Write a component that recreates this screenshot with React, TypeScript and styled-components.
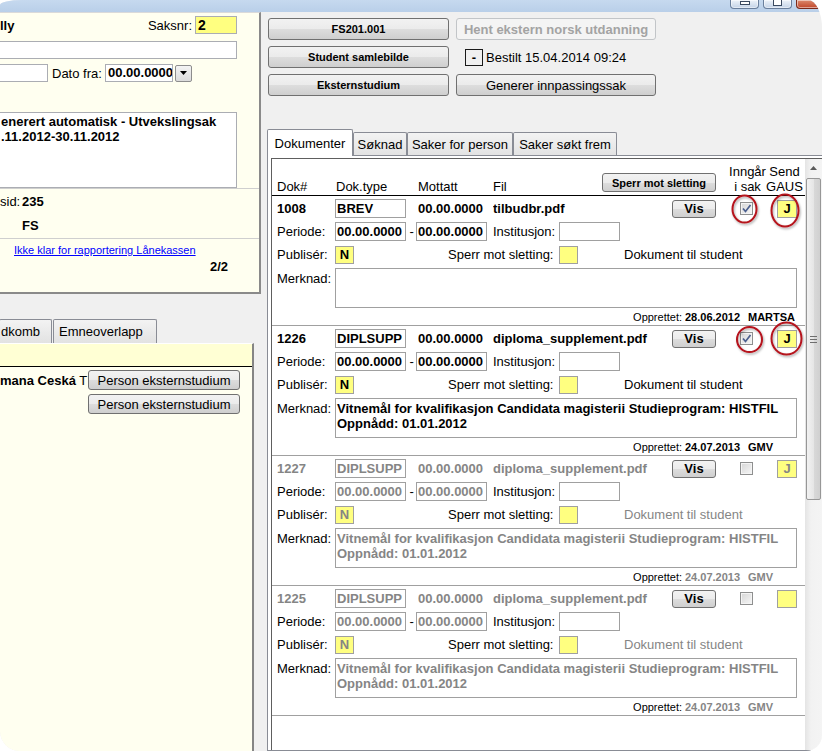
import React from "react";
import styled, { createGlobalStyle } from "styled-components";

const GlobalStyle = createGlobalStyle`
  html, body { margin: 0; padding: 0; background: #ffffff; }
  body { font-family: "Liberation Sans", Arial, sans-serif; font-size: 13px; color: #000; }
  *, *::before, *::after { box-sizing: border-box; }
`;

const GRAY_TEXT = "#858585";
const FIELD_YELLOW = "#ffff80";

/* ---------- window frame ---------- */
const Frame = styled.div`
  position: relative;
  width: 822px;
  height: 751px;
  display: flex;
  flex-direction: column;
  overflow: hidden;
  background: #f0f0f0;
  border-radius: 22px 14px 16px 20px / 5px 28px 16px 20px;
`;

const TitleBar = styled.div`
  flex: none;
  height: 12px;
  background: linear-gradient(#c6d9ef, #b9cfe9);
  display: flex;
  justify-content: flex-end;
  align-items: flex-start;
  gap: 4px;
`;

const WindowButton = styled.div<{ $close?: boolean }>`
  width: ${(p) => (p.$close ? 26 : 29)}px;
  height: 9px;
  border: 1px solid ${(p) => (p.$close ? "#7a2a1a" : "#6a7f9c")};
  border-top: none;
  border-radius: 0 0 4px 4px;
  background: ${(p) =>
    p.$close ? "linear-gradient(#dc8a6e, #c0462a)" : "linear-gradient(#eef3f9, #c4d3e7)"};
  box-shadow: inset 0 0 0 1px rgba(255, 255, 255, 0.5);
  display: flex;
  justify-content: center;
  align-items: flex-start;
`;

const MinGlyph = styled.span`
  margin-top: 1px;
  width: 10px;
  height: 4px;
  background: #fff;
  border: 1px solid #3b4a60;
`;

const MaxGlyph = styled.span`
  width: 9px;
  height: 6px;
  border: 1px solid #3b4a60;
  border-top: none;
  background: #fff;
  box-shadow: inset 0 0 0 1px #fff;
`;

const Body = styled.div`
  flex: 1;
  min-height: 0;
  display: flex;
`;

/* ---------- left column ---------- */
const LeftColumn = styled.div`
  width: 261px;
  flex: none;
  display: flex;
  flex-direction: column;
`;

const CasePanel = styled.div`
  height: 282px;
  flex: none;
  background: #fffff0;
  border-top: 1px solid #dadada;
  border-right: 2px solid #8a8a8a;
  border-bottom: 2px solid #8a8a8a;
  display: flex;
  flex-direction: column;
`;

const CaseRow = styled.div<{ $top: number }>`
  margin-top: ${(p) => p.$top}px;
  height: 18px;
  padding-right: 22px;
  display: flex;
  align-items: center;
  white-space: nowrap;
`;

const Strong = styled.span`
  font-weight: bold;
`;

const Grow = styled.div`
  flex: 1;
`;

const Label = styled.span<{ $w?: number; $ml?: number }>`
  flex: none;
  ${(p) => (p.$w ? `width: ${p.$w}px;` : "")}
  margin-left: ${(p) => p.$ml ?? 0}px;
  white-space: nowrap;
`;

const TextBox = styled.div<{ $w: number; $bg?: string; $bleed?: boolean; $ml?: number; $big?: boolean }>`
  flex: none;
  width: ${(p) => p.$w}px;
  height: 18px;
  margin-left: ${(p) => (p.$bleed ? -2 : p.$ml ?? 0)}px;
  border: 1px solid #abadb3;
  background: ${(p) => p.$bg ?? "#ffffff"};
  font-weight: bold;
  font-size: ${(p) => (p.$big ? 14 : 13)}px;
  line-height: 16px;
  padding: 0 2px;
  overflow: hidden;
  white-space: nowrap;
`;

const DropButton = styled.div`
  flex: none;
  margin-left: 2px;
  width: 17px;
  height: 17px;
  border: 1px solid #8d8d8d;
  border-radius: 2px;
  background: linear-gradient(#f4f4f4, #dcdcdc);
  display: flex;
  align-items: center;
  justify-content: center;
`;

const CaseArea = styled.div`
  margin-top: 30px;
  margin-left: -2px;
  width: 239px;
  height: 76px;
  flex: none;
  border: 1px solid #abadb3;
  background: #ffffff;
  padding: 1px 0 0 2px;
  font-weight: bold;
  line-height: 15px;
  white-space: nowrap;
  overflow: hidden;
`;

const InfoBlock = styled.div`
  height: 50px;
  flex: none;
  border-top: 1px solid #cfcfcf;
  padding-top: 5px;
  display: grid;
  grid-template-columns: 22px auto;
  grid-auto-rows: 15px;
  row-gap: 9px;
  line-height: 15px;
`;

const LinkBlock = styled.div`
  flex: 1;
  border-top: 1px solid #cfcfcf;
  padding: 5px 31px 0 14px;
  display: flex;
  flex-direction: column;
`;

const CaseLink = styled.a`
  font-size: 11px;
  line-height: 13px;
  color: #0000ff;
  text-decoration: underline;
  white-space: nowrap;
`;

const Counter = styled.div`
  margin-top: 2px;
  align-self: flex-end;
  font-weight: bold;
  line-height: 15px;
`;

const LowerLeft = styled.div`
  flex: 1;
  min-height: 0;
  padding-top: 25px;
  display: flex;
  flex-direction: column;
`;

const SmallTabRow = styled.div`
  height: 24px;
  flex: none;
  display: flex;
  align-items: flex-end;
  gap: 1px;
`;

const SmallTab = styled.div<{ $w: number; $pad: number; $ml?: number }>`
  width: ${(p) => p.$w}px;
  height: 24px;
  margin-left: ${(p) => p.$ml ?? 0}px;
  padding-left: ${(p) => p.$pad}px;
  border: 1px solid #898c95;
  border-bottom: none;
  border-radius: 2px 2px 0 0;
  background: linear-gradient(#f3f3f3, #e2e2e2);
  display: flex;
  align-items: center;
  white-space: nowrap;
  overflow: hidden;
`;

const PersonPanel = styled.div`
  flex: 1;
  width: 254px;
  background: #fffff0;
  border-top: 1px solid #ffffff;
  border-right: 2px solid #858585;
  display: flex;
  flex-direction: column;
`;

const PersonHeader = styled.div`
  height: 23px;
  flex: none;
  background: #ffffd4;
  border-bottom: 1px solid #000000;
`;

const PersonRow = styled.div<{ $top: number }>`
  margin-top: ${(p) => p.$top}px;
  height: 20px;
  display: flex;
  align-items: center;
`;

const NameCell = styled.div`
  width: 88px;
  flex: none;
  white-space: nowrap;
  overflow: hidden;
`;

const PersonButton = styled.button`
  width: 152px;
  height: 20px;
  flex: none;
  padding: 0;
  font-family: inherit;
  font-size: 13px;
  color: #000;
  border: 1px solid #707070;
  border-radius: 3px;
  background: linear-gradient(#f2f2f2 0%, #ebebeb 50%, #dddddd 51%, #cfcfcf 100%);
`;

/* ---------- right column ---------- */
const RightColumn = styled.div`
  flex: 1;
  min-width: 0;
  padding-left: 7px;
  display: flex;
  flex-direction: column;
`;

const ActionGrid = styled.div`
  margin-top: 6px;
  display: grid;
  grid-template-columns: 181px 200px;
  grid-auto-rows: 22px;
  column-gap: 7px;
  row-gap: 6px;
`;

const ActionButton = styled.button<{ $bold?: boolean; $off?: boolean }>`
  padding: 0;
  font-family: inherit;
  font-size: ${(p) => (p.$bold ? 11 : 13)}px;
  font-weight: ${(p) => (p.$bold || p.$off ? "bold" : "normal")};
  color: ${(p) => (p.$off ? "#a3a3a3" : "#000")};
  border: 1px solid ${(p) => (p.$off ? "#c2c5c8" : "#707070")};
  border-radius: 3px;
  background: ${(p) =>
    p.$off ? "#f4f4f4" : "linear-gradient(#f2f2f2 0%, #ebebeb 50%, #dddddd 51%, #cfcfcf 100%)"};
`;

const OrderLine = styled.div`
  display: flex;
  align-items: center;
  padding-left: 9px;
  white-space: nowrap;
`;

const MinusBox = styled.div`
  width: 18px;
  height: 17px;
  border: 1px solid #1a1a1a;
  display: flex;
  align-items: center;
  justify-content: center;
  font-weight: bold;
  margin-right: 3px;
`;

const TabRow = styled.div`
  margin-top: 33px;
  margin-left: -1px;
  height: 26px;
  flex: none;
  display: flex;
  align-items: flex-end;
`;

const MainTab = styled.div<{ $w: number; $active?: boolean }>`
  width: ${(p) => p.$w}px;
  height: ${(p) => (p.$active ? 27 : 23)}px;
  margin-bottom: ${(p) => (p.$active ? -1 : 0)}px;
  position: relative;
  z-index: ${(p) => (p.$active ? 1 : 0)};
  border: 1px solid #898c95;
  border-bottom: none;
  border-radius: 2px 2px 0 0;
  background: ${(p) => (p.$active ? "#ffffff" : "linear-gradient(#f3f3f3, #e3e3e3)")};
  display: flex;
  align-items: center;
  justify-content: center;
  white-space: nowrap;
`;

const TabPanel = styled.div`
  flex: 1;
  min-height: 0;
  margin: 0 -5px 0 -1px;
  border: 1px solid #898c95;
  background: #ffffff;
  padding: 2px 3px 0 3px;
  display: flex;
`;

const ListBox = styled.div`
  flex: 1;
  min-width: 0;
  border: 1px solid #5e5e5e;
  border-bottom: none;
  display: flex;
`;

const List = styled.div`
  flex: 1;
  min-width: 0;
  background: #ffffff;
  display: flex;
  flex-direction: column;
`;

const HeaderRow = styled.div`
  height: 37px;
  flex: none;
  border-bottom: 1px solid #000;
  padding: 0 2px 1px 5px;
  display: flex;
  align-items: flex-end;
  line-height: 15px;
  white-space: nowrap;
`;

const HeadCell = styled.div<{ $w?: number; $grow?: boolean; $center?: boolean }>`
  ${(p) => (p.$w ? `width: ${p.$w}px; flex: none;` : "")}
  ${(p) => (p.$grow ? "flex: 1;" : "")}
  ${(p) => (p.$center ? "text-align: center;" : "")}
`;

const SperrButton = styled.button`
  width: 114px;
  height: 19px;
  flex: none;
  margin: 0 13px 2px 0;
  padding: 0;
  font-family: inherit;
  font-size: 11px;
  font-weight: bold;
  color: #000;
  border: 1px solid #707070;
  border-radius: 3px;
  background: linear-gradient(#f2f2f2 0%, #ebebeb 50%, #dddddd 51%, #cfcfcf 100%);
`;

const Record = styled.div`
  height: 130px;
  flex: none;
  border-bottom: 1px solid #a0a0a0;
  padding: 3px 8px 0 5px;
  display: flex;
  flex-direction: column;
`;

const FieldStack = styled.div`
  display: flex;
  flex-direction: column;
  gap: 4px;
`;

const FieldRow = styled.div<{ $tall?: boolean }>`
  height: ${(p) => (p.$tall ? 40 : 19)}px;
  display: flex;
  align-items: ${(p) => (p.$tall ? "flex-start" : "center")};
  white-space: nowrap;
`;

const Cell = styled.div<{ $w?: number; $ml?: number; $dim?: boolean; $bold?: boolean; $grow?: boolean }>`
  ${(p) => (p.$w !== undefined ? `width: ${p.$w}px; flex: none;` : "")}
  ${(p) => (p.$grow ? "flex: 1; min-width: 0;" : "")}
  margin-left: ${(p) => p.$ml ?? 0}px;
  color: ${(p) => (p.$dim ? GRAY_TEXT : "#000")};
  font-weight: ${(p) => (p.$bold ? "bold" : "normal")};
  overflow: hidden;
`;

const RemarkLabel = styled.div`
  width: 58px;
  flex: none;
  padding-top: 3px;
  line-height: 15px;
`;

const Input = styled.div<{ $w: number; $ml?: number; $dim?: boolean }>`
  width: ${(p) => p.$w}px;
  height: 19px;
  flex: none;
  margin-left: ${(p) => p.$ml ?? 0}px;
  border: 1px solid #a0a0a0;
  background: #ffffff;
  padding: 0 1px;
  line-height: 17px;
  font-weight: bold;
  color: ${(p) => (p.$dim ? GRAY_TEXT : "#000")};
  overflow: hidden;
`;

const FlagBox = styled.div<{ $w?: number; $ml?: number; $dim?: boolean }>`
  width: ${(p) => p.$w ?? 19}px;
  height: 18px;
  flex: none;
  margin-left: ${(p) => p.$ml ?? 0}px;
  border: 1px solid #a0a0a0;
  background: ${FIELD_YELLOW};
  display: flex;
  align-items: center;
  justify-content: center;
  font-weight: bold;
  color: ${(p) => (p.$dim ? GRAY_TEXT : "#000")};
`;

const VisButton = styled.button`
  width: 44px;
  height: 18px;
  flex: none;
  padding: 0;
  font-family: inherit;
  font-size: 13px;
  font-weight: bold;
  color: #000;
  border: 1px solid #707070;
  border-radius: 3px;
  background: linear-gradient(#f2f2f2 0%, #ebebeb 50%, #dddddd 51%, #cfcfcf 100%);
`;

const CheckBox = styled.div`
  width: 13px;
  height: 13px;
  flex: none;
  margin-left: 24px;
  border: 1px solid #8e8f8f;
  background: linear-gradient(135deg, #d6d6d6, #f7f7f7);
  box-shadow: inset 0 0 0 1px #f4f4f4;
  display: flex;
  align-items: center;
  justify-content: center;
`;

const Remark = styled.div<{ $dim?: boolean }>`
  flex: 1;
  height: 40px;
  border: 1px solid #a0a0a0;
  padding: 2px 1px 0 1px;
  font-weight: bold;
  line-height: 15px;
  color: ${(p) => (p.$dim ? GRAY_TEXT : "#000")};
  overflow: hidden;
  white-space: nowrap;
`;

const Footer = styled.div`
  height: 17px;
  display: flex;
  justify-content: flex-end;
  align-items: center;
  font-size: 11px;
  white-space: nowrap;
`;

const Scrollbar = styled.div`
  width: 17px;
  flex: none;
  background: linear-gradient(90deg, #e4e4e4, #f2f2f2 35%, #f4f4f4);
  display: flex;
  flex-direction: column;
  align-items: center;
`;

const ScrollArrow = styled.div`
  height: 17px;
  width: 100%;
  display: flex;
  align-items: center;
  justify-content: center;
`;

const Thumb = styled.div`
  margin-top: 2px;
  width: 15px;
  height: 322px;
  border: 1px solid #979797;
  border-radius: 2px;
  background: linear-gradient(90deg, #f2f2f2, #e6e6e6 50%, #d9d9d9 51%, #d0d0d0);
  display: flex;
  align-items: center;
  justify-content: center;
`;

const Annotations = styled.svg`
  position: absolute;
  left: 0;
  top: 0;
  pointer-events: none;
`;

/* ---------- data ---------- */
type Doc = {
  nr: string;
  type: string;
  file: string;
  remark: string[];
  inSak: boolean;
  gaus: string;
  created: string;
  user: string;
  dim: boolean;
};

const REMARK = [
  "Vitnemål for kvalifikasjon Candidata magisterii Studieprogram: HISTFIL",
  "Oppnådd: 01.01.2012",
];

const docs: Doc[] = [
  { nr: "1008", type: "BREV", file: "tilbudbr.pdf", remark: [], inSak: true, gaus: "J", created: "28.06.2012", user: "MARTSA", dim: false },
  { nr: "1226", type: "DIPLSUPP", file: "diploma_supplement.pdf", remark: REMARK, inSak: true, gaus: "J", created: "24.07.2013", user: "GMV", dim: false },
  { nr: "1227", type: "DIPLSUPP", file: "diploma_supplement.pdf", remark: REMARK, inSak: false, gaus: "J", created: "24.07.2013", user: "GMV", dim: true },
  { nr: "1225", type: "DIPLSUPP", file: "diploma_supplement.pdf", remark: REMARK, inSak: false, gaus: "", created: "24.07.2013", user: "GMV", dim: true },
];

const circles = [
  { cx: 744.5, cy: 209, rx: 12, ry: 13.5 },
  { cx: 785, cy: 210.5, rx: 13.5, ry: 16 },
  { cx: 749.5, cy: 339.5, rx: 12.5, ry: 12.5 },
  { cx: 786.5, cy: 338.5, rx: 15, ry: 16 },
];

function DocRecord({ d }: { d: Doc }) {
  return (
    <Record>
      <FieldStack>
        <FieldRow>
          <Cell $w={58} $bold $dim={d.dim}>{d.nr}</Cell>
          <Input $w={71} $dim={d.dim}>{d.type}</Input>
          <Cell $w={75} $ml={12} $bold $dim={d.dim}>00.00.0000</Cell>
          <Cell $grow $bold $dim={d.dim}>{d.file}</Cell>
          <VisButton>Vis</VisButton>
          <CheckBox>
            {d.inSak && (
              <svg width="11" height="11" viewBox="0 0 11 11">
                <path d="M2 5.5 L4.5 8.5 L9.5 2" fill="none" stroke="#4b5f8e" strokeWidth="1.7" />
              </svg>
            )}
          </CheckBox>
          <FlagBox $w={20} $ml={24} $dim={d.dim}>{d.gaus}</FlagBox>
        </FieldRow>
        <FieldRow>
          <Cell $w={58}>Periode:</Cell>
          <Input $w={71} $dim={d.dim}>00.00.0000</Input>
          <Cell $w={10}>&nbsp;-</Cell>
          <Input $w={71} $dim={d.dim}>00.00.0000</Input>
          <Cell $w={66} $ml={6}>Institusjon:</Cell>
          <Input $w={61} />
        </FieldRow>
        <FieldRow>
          <Cell $w={58}>Publisér:</Cell>
          <FlagBox $dim={d.dim}>N</FlagBox>
          <Cell $w={111} $ml={94}>Sperr mot sletting:</Cell>
          <FlagBox />
          <Cell $ml={46} $dim={d.dim}>Dokument til student</Cell>
        </FieldRow>
        <FieldRow $tall>
          <RemarkLabel>Merknad:</RemarkLabel>
          <Remark $dim={d.dim}>
            {d.remark.map((line) => (
              <div key={line}>{line}</div>
            ))}
          </Remark>
        </FieldRow>
      </FieldStack>
      <Footer>
        <Cell>Opprettet:</Cell>
        <Cell $w={63} $ml={3} $bold $dim={d.dim}>{d.created}</Cell>
        <Cell $w={49} $bold $dim={d.dim}>{d.user}</Cell>
      </Footer>
    </Record>
  );
}

export default function App() {
  return (
    <>
      <GlobalStyle />
      <Frame>
        <TitleBar>
          <WindowButton>
            <MinGlyph />
          </WindowButton>
          <WindowButton>
            <MaxGlyph />
          </WindowButton>
          <WindowButton $close />
        </TitleBar>
        <Body>
          <LeftColumn>
            <CasePanel>
              <CaseRow $top={3}>
                <Strong>lly</Strong>
                <Grow />
                <Label>Saksnr:</Label>
                <TextBox $w={42} $bg={FIELD_YELLOW} $ml={3} $big>2</TextBox>
              </CaseRow>
              <CaseRow $top={7}>
                <TextBox $w={239} $bleed />
              </CaseRow>
              <CaseRow $top={5}>
                <TextBox $w={50} $bleed />
                <Label $w={53} $ml={4}>Dato fra:</Label>
                <TextBox $w={68}>00.00.0000</TextBox>
                <DropButton>
                  <svg width="7" height="4" viewBox="0 0 7 4">
                    <path d="M0 0 H7 L3.5 4 Z" fill="#000" />
                  </svg>
                </DropButton>
              </CaseRow>
              <CaseArea>
                <div>enerert automatisk - Utvekslingsak</div>
                <div>.11.2012-30.11.2012</div>
              </CaseArea>
              <InfoBlock>
                <span>sid:</span>
                <Strong>235</Strong>
                <span />
                <Strong>FS</Strong>
              </InfoBlock>
              <LinkBlock>
                <CaseLink href="#">Ikke klar for rapportering Lånekassen</CaseLink>
                <Counter>2/2</Counter>
              </LinkBlock>
            </CasePanel>
            <LowerLeft>
              <SmallTabRow>
                <SmallTab $w={53} $pad={1} $ml={-1}>dkomb</SmallTab>
                <SmallTab $w={104} $pad={5}>Emneoverlapp</SmallTab>
              </SmallTabRow>
              <PersonPanel>
                <PersonHeader />
                <PersonRow $top={3}>
                  <NameCell>
                    <Strong>mana Ceská</Strong> T
                  </NameCell>
                  <PersonButton>Person eksternstudium</PersonButton>
                </PersonRow>
                <PersonRow $top={4}>
                  <NameCell />
                  <PersonButton>Person eksternstudium</PersonButton>
                </PersonRow>
              </PersonPanel>
            </LowerLeft>
          </LeftColumn>

          <RightColumn>
            <ActionGrid>
              <ActionButton $bold>FS201.001</ActionButton>
              <ActionButton $off>Hent ekstern norsk utdanning</ActionButton>
              <ActionButton $bold>Student samlebilde</ActionButton>
              <OrderLine>
                <MinusBox>-</MinusBox>
                <span>Bestilt 15.04.2014 09:24</span>
              </OrderLine>
              <ActionButton $bold>Eksternstudium</ActionButton>
              <ActionButton>Generer innpassingssak</ActionButton>
            </ActionGrid>

            <TabRow>
              <MainTab $w={86} $active>Dokumenter</MainTab>
              <MainTab $w={54}>Søknad</MainTab>
              <MainTab $w={106}>Saker for person</MainTab>
              <MainTab $w={104}>Saker søkt frem</MainTab>
            </TabRow>

            <TabPanel>
              <ListBox>
                <List>
                  <HeaderRow>
                    <HeadCell $w={59}>Dok#</HeadCell>
                    <HeadCell $w={82}>Dok.type</HeadCell>
                    <HeadCell $w={75}>Mottatt</HeadCell>
                    <HeadCell $grow>Fil</HeadCell>
                    <SperrButton>Sperr mot sletting</SperrButton>
                    <HeadCell $w={37} $center>
                      Inngår
                      <br />i sak
                    </HeadCell>
                    <HeadCell $w={37} $center>
                      Send
                      <br />
                      GAUS
                    </HeadCell>
                  </HeaderRow>
                  {docs.map((d) => (
                    <DocRecord key={d.nr} d={d} />
                  ))}
                </List>
                <Scrollbar>
                  <ScrollArrow>
                    <svg width="7" height="4" viewBox="0 0 7 4">
                      <path d="M0 4 H7 L3.5 0 Z" fill="#5a5a5a" />
                    </svg>
                  </ScrollArrow>
                  <Thumb>
                    <svg width="7" height="7" viewBox="0 0 7 7">
                      <path d="M0 0.5 H7 M0 3.5 H7 M0 6.5 H7" stroke="#6e6e6e" strokeWidth="1" />
                    </svg>
                  </Thumb>
                </Scrollbar>
              </ListBox>
            </TabPanel>
          </RightColumn>
        </Body>

        <Annotations width="822" height="751" viewBox="0 0 822 751">
          <defs>
            <filter id="shadow" x="-20%" y="-20%" width="140%" height="140%">
              <feDropShadow dx="1" dy="1.5" stdDeviation="1" floodColor="#000" floodOpacity="0.35" />
            </filter>
          </defs>
          {circles.map((c, i) => (
            <ellipse
              key={i}
              cx={c.cx}
              cy={c.cy}
              rx={c.rx}
              ry={c.ry}
              fill="none"
              stroke="#b5121b"
              strokeWidth="2"
              filter="url(#shadow)"
            />
          ))}
        </Annotations>
      </Frame>
    </>
  );
}
